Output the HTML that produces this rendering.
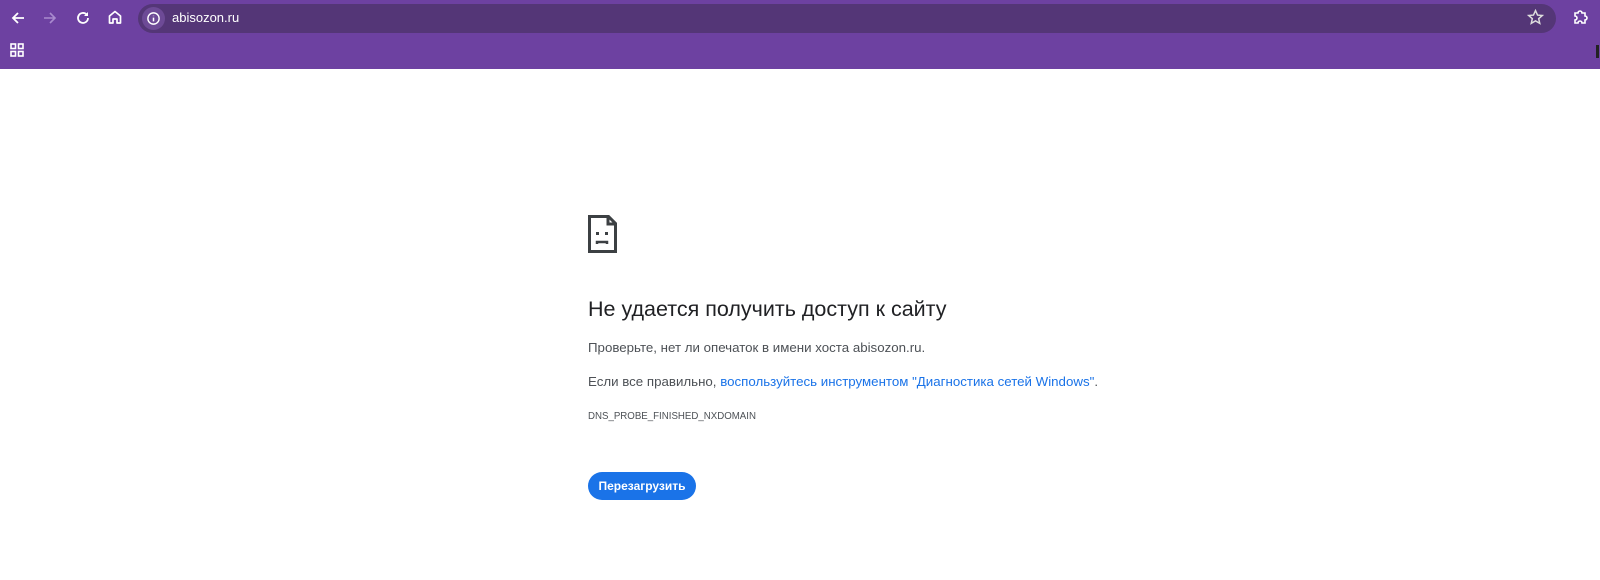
<!DOCTYPE html>
<html><head><meta charset="utf-8"><style>
*{margin:0;padding:0;box-sizing:border-box}
body{width:1600px;height:580px;overflow:hidden;background:#fff;font-family:"Liberation Sans",sans-serif;position:relative}
.top{position:absolute;left:0;top:0;width:1600px;height:69px;background:#6d41a1}
.omni{position:absolute;left:138px;top:4px;width:1418px;height:29px;border-radius:15px;background:#543677}
.info{position:absolute;left:142px;top:7px;width:23px;height:23px;border-radius:50%;background:#6d4a96}
.url{position:absolute;left:172px;top:10px;color:#fff;font-size:13px}
.ic{position:absolute}
h1{position:absolute;left:588px;top:297px;font-size:21.5px;font-weight:normal;color:#202124;white-space:nowrap}
p{position:absolute;left:588px;font-size:13.3px;color:#4d5156;white-space:nowrap}
a{color:#1a73e8;text-decoration:none}
.btn{position:absolute;left:588px;top:472px;width:108px;height:28px;border-radius:14px;background:#1a73e8;color:#fff;font-size:12px;font-weight:bold;text-align:center;line-height:28px}
</style></head><body>
<div class="top"></div>
<div class="omni"></div>
<div class="info"></div>
<svg class="ic" style="left:146px;top:11px" width="15" height="15" viewBox="0 0 16 16"><circle cx="8" cy="8" r="6" fill="none" stroke="#fff" stroke-width="1.5"/><path d="M8 7v4M8 5v.5" stroke="#fff" stroke-width="1.6"/></svg>
<div class="url">abisozon.ru</div>
<svg class="ic" style="left:10px;top:10px" width="16" height="16" viewBox="0 0 16 16"><path d="M14 8H3M8 3L3 8l5 5" fill="none" stroke="#fff" stroke-width="1.8"/></svg>
<svg class="ic" style="left:42px;top:10px" width="16" height="16" viewBox="0 0 16 16"><path d="M2 8h11M8 3l5 5-5 5" fill="none" stroke="#a98bce" stroke-width="1.6"/></svg>
<svg class="ic" style="left:75px;top:10px" width="16" height="16" viewBox="0 0 16 16"><path d="M13 8a5 5 0 1 1-1.5-3.6" fill="none" stroke="#fff" stroke-width="1.8"/><path d="M13 2v4H9z" fill="#fff"/></svg>
<svg class="ic" style="left:107px;top:9px" width="16" height="16" viewBox="0 0 16 16"><path d="M2.5 14V7L8 2.5 13.5 7v7H10V10H6v4z" fill="none" stroke="#fff" stroke-width="1.7" stroke-linejoin="round"/></svg>
<svg class="ic" style="left:1527px;top:9px" width="17" height="17" viewBox="0 0 16 16"><path d="M8 1.5l1.9 4.2 4.5.4-3.4 3 1 4.4L8 11.2l-4 2.3 1-4.4-3.4-3 4.5-.4z" fill="none" stroke="#ddd" stroke-width="1.4"/></svg>
<svg class="ic" style="left:1572px;top:8px" width="18" height="18" viewBox="0 0 18 18"><path d="M3 5h3a2 2 0 0 1 4 0h3v3a2 2 0 0 1 0 4v3H10a2 2 0 0 0-4 0H3v-3a2 2 0 0 0 0-4z" fill="none" stroke="#fff" stroke-width="1.6"/></svg>
<div style="position:absolute;left:1596px;top:45px;width:3px;height:13px;background:#222"></div>
<svg class="ic" style="left:10px;top:43px" width="14" height="14" viewBox="0 0 14 14"><g fill="none" stroke="#fff" stroke-width="1.6"><rect x="1" y="1" width="4.5" height="4.5"/><rect x="8.5" y="1" width="4.5" height="4.5"/><rect x="1" y="8.5" width="4.5" height="4.5"/><rect x="8.5" y="8.5" width="4.5" height="4.5"/></g></svg>
<svg class="ic" style="left:588px;top:215px" width="30" height="38" viewBox="0 0 30 38"><path d="M1.5 1.5h19l7 7v28h-26z M20 1.5v7.5h7.5" fill="none" stroke="#3c4043" stroke-width="3"/><rect x="8" y="17" width="3" height="3" fill="#3c4043"/><rect x="17" y="17" width="3" height="3" fill="#3c4043"/><path d="M9 29v-2h10v2" fill="none" stroke="#3c4043" stroke-width="2.5"/></svg>
<h1>Не удается получить доступ к сайту</h1>
<p style="top:340px">Проверьте, нет ли опечаток в имени хоста abisozon.ru.</p>
<p style="top:374px">Если все правильно, <a>воспользуйтесь инструментом "Диагностика сетей Windows"</a>.</p>
<p style="top:411px;font-size:9.7px">DNS_PROBE_FINISHED_NXDOMAIN</p>
<div class="btn">Перезагрузить</div>
</body></html>
